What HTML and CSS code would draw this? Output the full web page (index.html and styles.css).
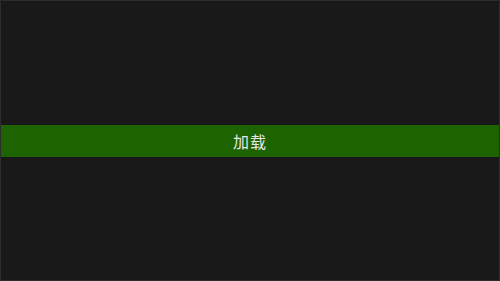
FILE: index.html
```html
<!DOCTYPE html>
<html lang="zh">
<head>
<meta charset="utf-8">
<link rel="stylesheet" href="styles.css">
</head>
<body>
<main class="screen">
  <div class="band"><span class="label">加载</span></div>
</main>
</body>
</html>
```
FILE: styles.css
```css
html, body {
  margin: 0;
  padding: 0;
  width: 500px;
  height: 281px;
  overflow: hidden;
}
.screen {
  box-sizing: border-box;
  width: 500px;
  height: 281px;
  border: 1px solid #2c2c2c;
  background-color: #181818;
  background-image: repeating-conic-gradient(#1b1b1b 0 25%, #161616 0 50%);
  background-size: 4px 4px;
  display: flex;
  flex-direction: column;
  justify-content: center;
}
.band {
  height: 32px;
  margin-top: 1px;
  background-color: #1e6400;
  background-image: repeating-conic-gradient(#1f6601 0 25%, #1c6100 0 50%);
  background-size: 4px 4px;
  display: flex;
  align-items: center;
  justify-content: center;
}
.label {
  font-family: "Noto Sans CJK SC", "Noto Sans", sans-serif;
  font-size: 16px;
  color: #e6e6e6;
  letter-spacing: 1px;
}
```
